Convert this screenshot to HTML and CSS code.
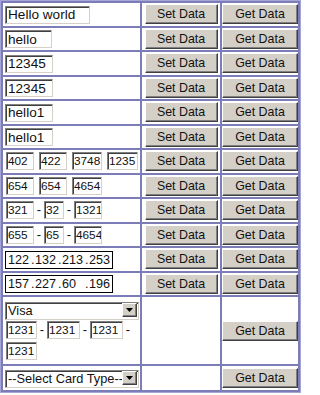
FILE: index.html
```html
<!DOCTYPE html>
<html>
<head>
<meta charset="utf-8">
<link rel="stylesheet" href="styles.css">
</head>
<body>
<table class="grid">
  <colgroup><col class="col-a"><col class="col-b"><col class="col-c"></colgroup>
  <tr>
    <td class="cell-in"><input class="tb w85" value="Hello world"></td>
    <td class="cell-btn"><button class="btn set">Set Data</button></td>
    <td class="cell-btn"><button class="btn get">Get Data</button></td>
  </tr>
  <tr>
    <td class="cell-in"><input class="tb w47" value="hello"></td>
    <td class="cell-btn"><button class="btn set">Set Data</button></td>
    <td class="cell-btn"><button class="btn get">Get Data</button></td>
  </tr>
  <tr>
    <td class="cell-in"><input class="tb w48" value="12345"></td>
    <td class="cell-btn"><button class="btn set">Set Data</button></td>
    <td class="cell-btn"><button class="btn get">Get Data</button></td>
  </tr>
  <tr>
    <td class="cell-in"><input class="tb w48" value="12345"></td>
    <td class="cell-btn"><button class="btn set">Set Data</button></td>
    <td class="cell-btn"><button class="btn get">Get Data</button></td>
  </tr>
  <tr>
    <td class="cell-in"><input class="tb w48" value="hello1"></td>
    <td class="cell-btn"><button class="btn set">Set Data</button></td>
    <td class="cell-btn"><button class="btn get">Get Data</button></td>
  </tr>
  <tr>
    <td class="cell-in"><input class="tb w48" value="hello1"></td>
    <td class="cell-btn"><button class="btn set">Set Data</button></td>
    <td class="cell-btn"><button class="btn get">Get Data</button></td>
  </tr>
  <tr>
    <td class="cell-in">
      <div class="boxes">
        <input class="tb sm w28" value="402"><input class="tb sm w28" value="422"><input class="tb sm w30" value="3748"><input class="tb sm w31" value="1235">
      </div>
    </td>
    <td class="cell-btn"><button class="btn set">Set Data</button></td>
    <td class="cell-btn"><button class="btn get">Get Data</button></td>
  </tr>
  <tr>
    <td class="cell-in">
      <div class="boxes">
        <input class="tb sm w28" value="654"><input class="tb sm w28" value="654"><input class="tb sm w30" value="4654">
      </div>
    </td>
    <td class="cell-btn"><button class="btn set">Set Data</button></td>
    <td class="cell-btn"><button class="btn get">Get Data</button></td>
  </tr>
  <tr>
    <td class="cell-in">
      <div class="dashed">
        <input class="tb sm w28" value="321"><span class="dash">-</span><input class="tb sm w20" value="32"><span class="dash">-</span><input class="tb sm w28" value="1321">
      </div>
    </td>
    <td class="cell-btn"><button class="btn set">Set Data</button></td>
    <td class="cell-btn"><button class="btn get">Get Data</button></td>
  </tr>
  <tr>
    <td class="cell-in">
      <div class="dashed">
        <input class="tb sm w28" value="655"><span class="dash">-</span><input class="tb sm w20" value="65"><span class="dash">-</span><input class="tb sm w28" value="4654">
      </div>
    </td>
    <td class="cell-btn"><button class="btn set">Set Data</button></td>
    <td class="cell-btn"><button class="btn get">Get Data</button></td>
  </tr>
  <tr>
    <td class="cell-in">
      <div class="ip">
        <input class="oct" value="122"><span class="dot">.</span><input class="oct" value="132"><span class="dot">.</span><input class="oct" value="213"><span class="dot">.</span><input class="oct" value="253">
      </div>
    </td>
    <td class="cell-btn"><button class="btn set">Set Data</button></td>
    <td class="cell-btn"><button class="btn get">Get Data</button></td>
  </tr>
  <tr>
    <td class="cell-in">
      <div class="ip">
        <input class="oct" value="157"><span class="dot">.</span><input class="oct" value="227"><span class="dot">.</span><input class="oct" value="60"><span class="dot">.</span><input class="oct" value="196">
      </div>
    </td>
    <td class="cell-btn"><button class="btn set">Set Data</button></td>
    <td class="cell-btn"><button class="btn get">Get Data</button></td>
  </tr>
  <tr class="row-card">
    <td class="cell-in">
      <div class="sel">
        <select class="dd"><option>Visa</option></select>
        <span class="arrow"><svg width="7" height="4" viewBox="0 0 7 4"><path d="M0 0H7L3.5 4Z" fill="#000"/></svg></span>
      </div>
      <div class="card">
        <input class="tb sm w31" value="1231"><span class="dash">-</span><input class="tb sm w33" value="1231"><span class="dash">-</span><input class="tb sm w33" value="1231"><span class="dash">-</span><input class="tb sm w31" value="1231">
      </div>
    </td>
    <td class="cell-btn"></td>
    <td class="cell-btn"><button class="btn get">Get Data</button></td>
  </tr>
  <tr class="row-last">
    <td class="cell-in">
      <div class="sel">
        <select class="dd"><option>--Select Card Type--</option></select>
        <span class="arrow"><svg width="7" height="4" viewBox="0 0 7 4"><path d="M0 0H7L3.5 4Z" fill="#000"/></svg></span>
      </div>
    </td>
    <td class="cell-btn"></td>
    <td class="cell-btn"><button class="btn get">Get Data</button></td>
  </tr>
</table>
</body>
</html>
```

FILE: styles.css
```css
html, body {
  margin: 0;
  padding: 0;
  background: #ffffff;
}

body {
  font-family: "Liberation Sans", Arial, sans-serif;
  color: #000;
}

.grid {
  table-layout: fixed;
  width: 301px;
  border: 1px solid #a6a6d6;
  border-spacing: 2px;
  background: #7c7cb9;
}

.col-a { width: 137px; }
.col-b { width: 78px; }
.col-c { width: 76px; }

.grid td {
  background: #ffffff;
  height: 22.5px;
  padding: 0;
  vertical-align: middle;
  box-sizing: border-box;
}

.cell-in {
  padding-left: 2px !important;
}

.cell-btn {
  text-align: center;
}

.row-card td { height: 67px; }
.row-last td { height: 24px; }

/* sunken text box */
.tb {
  box-sizing: border-box;
  height: 18px;
  margin: 0;
  padding: 0 0 0 2px;
  font-family: "Liberation Sans", Arial, sans-serif;
  font-size: 13.6px;
  color: #111;
  background: #fff;
  border: 1px solid;
  border-color: #808080 #d4d0c8 #d4d0c8 #808080;
  box-shadow: inset 1px 1px 0 #404040;
  outline: none;
  vertical-align: middle;
}

.tb.sm {
  font-size: 11.8px;
  padding-left: 1px;
}

.w85 { width: 85px; }
.w47 { width: 47px; }
.w48 { width: 48px; }
.w28 { width: 28px; }
.w30 { width: 30px; }
.w31 { width: 31px; }
.w20 { width: 20px; }
.w33 { width: 33px; }

.boxes {
  display: flex;
  align-items: center;
  gap: 5px;
  padding-left: 1px;
}

.dashed, .card {
  display: flex;
  align-items: center;
  padding-left: 1px;
}

.card {
  flex-wrap: wrap;
  width: 132px;
  row-gap: 3px;
  margin-top: 2px;
}

.dash {
  font-size: 13px;
  width: 10px;
  text-align: center;
  line-height: 16px;
  color: #111;
}

/* raised button */
.btn {
  box-sizing: border-box;
  height: 20px;
  margin: 0;
  padding: 0;
  font-family: "Liberation Sans", Arial, sans-serif;
  font-size: 12.4px;
  color: #111;
  background: #d4d0c8;
  border: 1px solid;
  border-color: #ffffff #404040 #404040 #ffffff;
  box-shadow: inset -1px -1px 0 #808080;
  vertical-align: middle;
}

.set { width: 73px; }
.get { width: 76px; }

/* IP address composite box */
.ip {
  display: inline-flex;
  align-items: center;
  box-sizing: border-box;
  height: 18px;
  border: 1px solid #000;
  padding-left: 1px;
  vertical-align: middle;
}

.oct {
  box-sizing: border-box;
  width: 24px;
  height: 16px;
  border: none;
  margin: 0;
  padding: 0 0 0 1px;
  font-family: "Liberation Sans", Arial, sans-serif;
  font-size: 12.6px;
  color: #111;
  background: transparent;
  outline: none;
}

.dot {
  font-size: 12.6px;
  width: 3px;
  line-height: 16px;
  color: #111;
}

/* drop-down */
.sel {
  position: relative;
  width: 134px;
  height: 18px;
}

.dd {
  appearance: none;
  -webkit-appearance: none;
  box-sizing: border-box;
  width: 134px;
  height: 18px;
  margin: 0;
  padding: 0 0 0 2px;
  font-family: "Liberation Sans", Arial, sans-serif;
  font-size: 12.8px;
  color: #111;
  background: #fff;
  border: 1px solid;
  border-color: #808080 #d4d0c8 #d4d0c8 #808080;
  box-shadow: inset 1px 1px 0 #404040;
  border-radius: 0;
  outline: none;
}

.arrow {
  position: absolute;
  right: 2px;
  top: 2px;
  width: 15px;
  height: 14px;
  box-sizing: border-box;
  background: #d4d0c8;
  border: 1px solid;
  border-color: #ffffff #404040 #404040 #ffffff;
  box-shadow: inset -1px -1px 0 #808080;
  display: flex;
  align-items: center;
  justify-content: center;
}
```
